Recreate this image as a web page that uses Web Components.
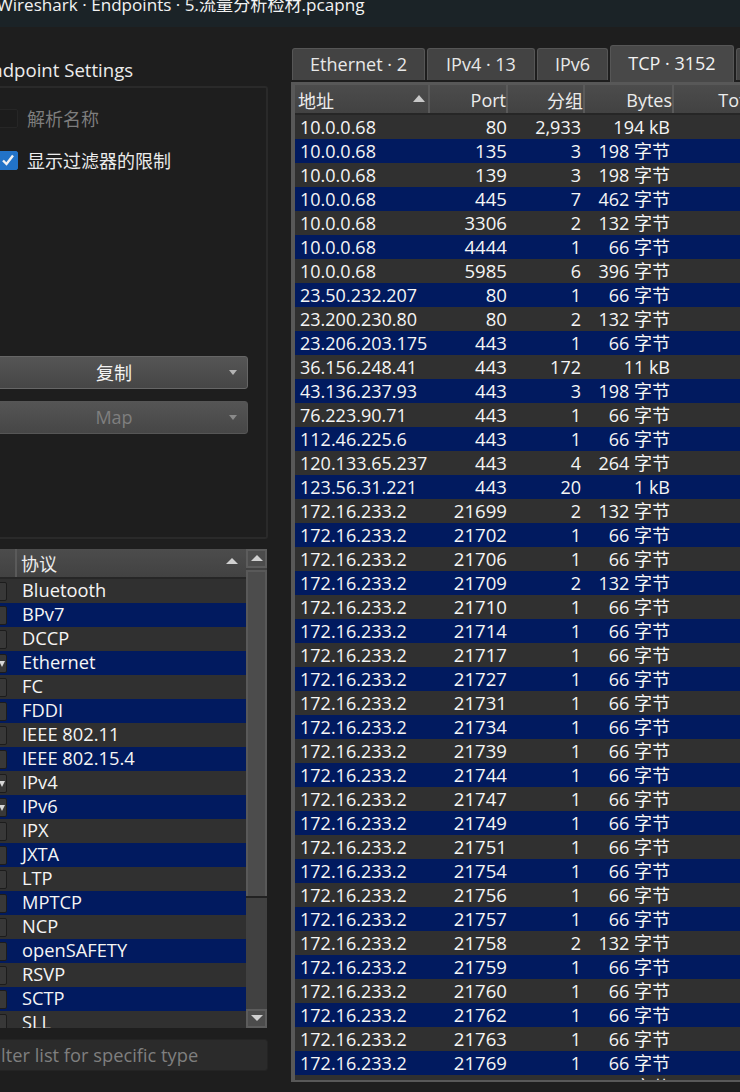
<!DOCTYPE html>
<html>
<head>
<meta charset="utf-8">
<title>Wireshark Endpoints</title>
<style>
  html, body { margin: 0; padding: 0; height: 100%; overflow: hidden; background: #1e1e1e; }
  body { font-family: "Open Sans", "Noto Sans CJK SC", sans-serif; font-size: 18px; color: #f0f0f0; }
</style>
</head>
<body>
<ws-window>
  <ws-settings slot="left"></ws-settings>
  <ws-proto-list slot="left"></ws-proto-list>
  <ws-filter slot="left" placeholder="Filter list for specific type"></ws-filter>
  <ws-tabs slot="right"></ws-tabs>
  <ws-endpoints slot="right"></ws-endpoints>
</ws-window>

<script>
const FONT = '"Open Sans", "Noto Sans CJK SC", sans-serif';

class WsWindow extends HTMLElement {
    constructor() {
        super();
        this.attachShadow({ mode: 'open' });
    }
    connectedCallback() {
        this.shadowRoot.innerHTML = `
        <style>
            :host { display: block; width: 740px; height: 1092px; overflow: hidden; font-family: ${FONT}; }
            .title { height: 27px; background: #1b2327; overflow: hidden; }
            .title span { display: block; margin: -8px 0 0 -3px; font-size: 17.1px; line-height: 26px; color: #f2f2f2; white-space: nowrap; }
            .body { display: flex; height: 1065px; }
            .left { width: 268px; flex: none; display: flex; flex-direction: column; overflow: hidden; padding-top: 28px; box-sizing: border-box; }
            .right { width: 449px; margin-left: 23px; flex: none; padding-top: 21px; box-sizing: border-box; }
            .gtitle { margin-left: -19px; font-size: 18.6px; line-height: 29px; height: 31px; white-space: nowrap; color: #ececec; }
        </style>
        <div class="title"><span>Wireshark · Endpoints · 5.流量分析检材.pcapng</span></div>
        <div class="body">
            <div class="left">
                <div class="gtitle">Endpoint Settings</div>
                <slot name="left"></slot>
            </div>
            <div class="right"><slot name="right"></slot></div>
        </div>`;
    }
}

class WsCheck extends HTMLElement {
    constructor() {
        super();
        this.attachShadow({ mode: 'open' });
    }
    connectedCallback() {
        const on = this.hasAttribute('checked');
        this.shadowRoot.innerHTML = `
        <style>
            :host { display: flex; align-items: center; height: 20px; font-size: 18px; color: ${on ? '#ececec' : '#7d7d7d'}; white-space: nowrap; }
            .box { width: 20px; height: 19px; margin-left: -2px; margin-right: 9px; border-radius: 2px; box-sizing: border-box; flex: none;
                   background: ${on ? '#2273c8' : '#1c1c1c'}; border: 1px solid ${on ? '#2273c8' : '#262626'}; display: flex; align-items: center; justify-content: center; }
            svg { display: block; }
        </style>
        <span class="box">${on ? '<svg width="14" height="12" viewBox="0 0 14 12"><path d="M2 6.5 L5.5 10 L12 1.5" fill="none" stroke="#f2f2f2" stroke-width="2.4"/></svg>' : ''}</span>
        <slot></slot>`;
    }
}

class WsButton extends HTMLElement {
    constructor() {
        super();
        this.attachShadow({ mode: 'open' });
    }
    connectedCallback() {
        const off = this.hasAttribute('disabled');
        this.shadowRoot.innerHTML = `
        <style>
            :host { display: block; height: 33px; margin-left: -20px; width: 268px; }
            .btn { height: 100%; box-sizing: border-box; display: flex; align-items: center; justify-content: center; position: relative; padding-bottom: 2px;
                   border: 1px solid ${off ? '#565656' : '#666'}; border-radius: 3px; font-size: 18px; background: linear-gradient(#555, #464646);
                   color: ${off ? '#7f7f7f' : '#f2f2f2'}; }
            .arrow { position: absolute; right: 10px; top: 13px; width: 0; height: 0; border-style: solid; border-color: ${off ? '#8a8a8a' : '#b4b4b4'} transparent transparent; border-width: 5px 4.5px 0; }
        </style>
        <div class="btn"><slot></slot><span class="arrow"></span></div>`;
    }
}

class WsSettings extends HTMLElement {
    constructor() {
        super();
        this.attachShadow({ mode: 'open' });
    }
    connectedCallback() {
        this.shadowRoot.innerHTML = `
        <style>
            :host { display: block; height: 453px; box-sizing: border-box; border: 2px solid #2a2a2a; border-left: 0; border-radius: 0 3px 3px 0; padding-top: 20px; }
            .checks { display: flex; flex-direction: column; gap: 22px; }
            .btns { display: flex; flex-direction: column; gap: 12px; margin-top: 186px; }
        </style>
        <div class="checks">
            <ws-check>解析名称</ws-check>
            <ws-check checked>显示过滤器的限制</ws-check>
        </div>
        <div class="btns">
            <ws-button>复制</ws-button>
            <ws-button disabled>Map</ws-button>
        </div>`;
    }
}

class WsProtoList extends HTMLElement {
    constructor() {
        super();
        this.attachShadow({ mode: 'open' });
    }
    connectedCallback() {
        const names = ['Bluetooth', 'BPv7', 'DCCP', 'Ethernet', 'FC', 'FDDI', 'IEEE 802.11', 'IEEE 802.15.4', 'IPv4', 'IPv6', 'IPX', 'JXTA', 'LTP', 'MPTCP', 'NCP', 'openSAFETY', 'RSVP', 'SCTP', 'SLL'];
        const checked = ['Ethernet', 'IPv4', 'IPv6'];
        const rows = names.map((n, i) => `
            <div class="row ${i % 2 ? 'blue' : ''}">
                <span class="box">${checked.includes(n) ? '<i></i>' : ''}</span>
                <span class="name">${n}</span>
            </div>`).join('');
        this.shadowRoot.innerHTML = `
        <style>
            :host { display: flex; height: 479px; margin-top: 10px; }
            .list { width: 246px; flex: none; overflow: hidden; }
            .head { height: 30px; box-sizing: border-box; display: flex; align-items: center; background: linear-gradient(#4c4c4c, #424242); border-bottom: 2px solid #262626; position: relative; padding: 0 0 0 21px; font-size: 18px; color: #ececec; }
            .head::before { content: ""; position: absolute; left: 15px; top: 0; bottom: 0; width: 2px; background: #5a5a5a; }
            .sort { position: absolute; right: 8px; top: 9px; width: 0; height: 0; border-left: 6px solid transparent; border-right: 6px solid transparent; border-bottom: 6px solid #d0d0d0; }
            .row { height: 24px; display: flex; align-items: center; background: #303030; white-space: nowrap; font-size: 18.3px; }
            .row.blue { background: #011a5f; }
            .box { width: 15px; height: 19px; margin-left: -8px; margin-right: 15px; box-sizing: border-box; border: 1px solid #1c1c1c; border-radius: 2px; background: #383838; flex: none; position: relative; }
            .box i { position: absolute; right: 1px; top: 6px; width: 0; height: 0; border-left: 3.5px solid transparent; border-right: 3.5px solid transparent; border-top: 6px solid #d8d8d8; }
            .name { color: #f5f5f5; padding-bottom: 3px; }
            .scroll { width: 21px; flex: none; display: flex; flex-direction: column; background: #414141; }
            .btn { height: 19px; flex: none; background: #4c4c4c; border: 2px solid #5c5c5c; box-sizing: border-box; position: relative; }
            .btn::after { content: ""; position: absolute; left: 2.5px; top: 4px; width: 0; height: 0; border-left: 6px solid transparent; border-right: 6px solid transparent; }
            .up::after { border-bottom: 6px solid #d0d0d0; }
            .down::after { border-top: 6px solid #d0d0d0; }
            .thumb { height: 326px; margin-top: 2px; flex: none; background: #4c4c4c; border: 2px solid #595959; border-bottom: 0; box-shadow: 0 2px 0 #222; box-sizing: border-box; }
            .track { flex: 1; }
        </style>
        <div class="list">
            <div class="head">协议<span class="sort"></span></div>
            ${rows}
        </div>
        <div class="scroll">
            <div class="btn up"></div>
            <div class="thumb"></div>
            <div class="track"></div>
            <div class="btn down"></div>
        </div>`;
    }
}

class WsFilter extends HTMLElement {
    constructor() {
        super();
        this.attachShadow({ mode: 'open' });
    }
    connectedCallback() {
        this.shadowRoot.innerHTML = `
        <style>
            :host { display: block; height: 32px; box-sizing: border-box; margin: 11px 0 0 -40px; background: #2b2b2b; border: 1px solid #242424; border-radius: 3px; overflow: hidden; }
            span { display: block; padding-left: 26px; font-size: 18.3px; line-height: 30px; color: #7f7f7f; white-space: nowrap; }
        </style>
        <span>${this.getAttribute('placeholder')}</span>`;
    }
}

class WsTabs extends HTMLElement {
    constructor() {
        super();
        this.attachShadow({ mode: 'open' });
    }
    connectedCallback() {
        const tabs = [['Ethernet · 2', 133], ['IPv4 · 13', 108], ['IPv6', 71], ['TCP · 3152', 124], ['', 60]];
        this.shadowRoot.innerHTML = `
        <style>
            :host { display: flex; align-items: flex-end; gap: 2px; height: 34px; margin-left: 1px; white-space: nowrap; font-size: 18px; }
            .tab { flex: none; height: 32px; margin-bottom: 2px; box-sizing: border-box; display: flex; align-items: center; justify-content: center; padding-bottom: 2px; background: #434343; border: 1px solid #565656; border-bottom: 0; border-radius: 3px 3px 0 0; color: #e8e8e8; }
            .tab.on { height: 37px; margin-bottom: 0; background: #484848; color: #f2f2f2; padding-bottom: 3px; }
        </style>
        ${tabs.map(([t, w], i) => `<div class="tab ${i === 3 ? 'on' : ''}" style="width:${w}px">${t}</div>`).join('')}`;
    }
}

class WsEndpoints extends HTMLElement {
    constructor() {
        super();
        this.attachShadow({ mode: 'open' });
    }
    connectedCallback() {
        const data = [
            ['10.0.0.68', 80, '2,933', '194 kB'], ['10.0.0.68', 135, 3, '198 字节'], ['10.0.0.68', 139, 3, '198 字节'],
            ['10.0.0.68', 445, 7, '462 字节'], ['10.0.0.68', 3306, 2, '132 字节'], ['10.0.0.68', 4444, 1, '66 字节'],
            ['10.0.0.68', 5985, 6, '396 字节'], ['23.50.232.207', 80, 1, '66 字节'], ['23.200.230.80', 80, 2, '132 字节'],
            ['23.206.203.175', 443, 1, '66 字节'], ['36.156.248.41', 443, 172, '11 kB'], ['43.136.237.93', 443, 3, '198 字节'],
            ['76.223.90.71', 443, 1, '66 字节'], ['112.46.225.6', 443, 1, '66 字节'], ['120.133.65.237', 443, 4, '264 字节'],
            ['123.56.31.221', 443, 20, '1 kB']
        ];
        const ports = [[21699, 2], 21702, 21706, [21709, 2], 21710, 21714, 21717, 21727, 21731, 21734, 21739, 21744, 21747, 21749, 21751, 21754, 21756, 21757, [21758, 2], 21759, 21760, 21762, 21763, 21769, 21774];
        ports.forEach(p => {
            const two = Array.isArray(p);
            data.push(['172.16.233.2', two ? p[0] : p, two ? 2 : 1, two ? '132 字节' : '66 字节']);
        });
        const rows = data.map((r, i) => `
            <div class="row ${i % 2 ? 'blue' : ''}">
                <span class="addr">${r[0]}</span><span class="port">${r[1]}</span><span class="pkts">${r[2]}</span><span class="bytes">${r[3]}</span>
            </div>`).join('');
        this.shadowRoot.innerHTML = `
        <style>
            :host { display: block; height: 1000px; box-sizing: border-box; border: 0 solid #585858; border-width: 3px 0 2px 4px; overflow: hidden; background: #262626; font-size: 18px; }
            .head { display: flex; height: 30px; box-sizing: border-box; background: linear-gradient(#4c4c4c, #424242); border-bottom: 2px solid #262626; color: #ececec; }
            .head div { box-sizing: border-box; display: flex; align-items: center; padding-top: 1px; border-right: 2px solid #5a5a5a; flex: none; position: relative; }
            .h0 { width: 135px; padding-left: 3px; }
            .h1 { width: 78px; justify-content: flex-end; }
            .h2 { width: 77px; justify-content: flex-end; }
            .h3 { width: 89px; justify-content: flex-end; }
            .head div.h4 { width: 86px; justify-content: flex-end; border: 0; }
            .sort { position: absolute; right: 3px; top: 10px; width: 0; height: 0; border-left: 6px solid transparent; border-right: 6px solid transparent; border-bottom: 7px solid #c8c8c8; }
            .row { height: 24px; display: flex; align-items: baseline; background: #303030; white-space: nowrap; color: #f5f5f5; line-height: 24px; }
            .row.blue { background: #011a5f; }
            .addr { width: 135px; padding-left: 5px; box-sizing: border-box; }
            .port { width: 77px; text-align: right; font-size: 18.6px; }
            .pkts { width: 74px; text-align: right; }
            .bytes { width: 89px; text-align: right; }
        </style>
        <div class="head">
            <div class="h0">地址<span class="sort"></span></div>
            <div class="h1">Port</div>
            <div class="h2">分组</div>
            <div class="h3">Bytes</div>
            <div class="h4">Total</div>
        </div>
        ${rows}`;
    }
}

customElements.define('ws-window', WsWindow);
customElements.define('ws-check', WsCheck);
customElements.define('ws-button', WsButton);
customElements.define('ws-settings', WsSettings);
customElements.define('ws-proto-list', WsProtoList);
customElements.define('ws-filter', WsFilter);
customElements.define('ws-tabs', WsTabs);
customElements.define('ws-endpoints', WsEndpoints);
</script>
</body>
</html>
